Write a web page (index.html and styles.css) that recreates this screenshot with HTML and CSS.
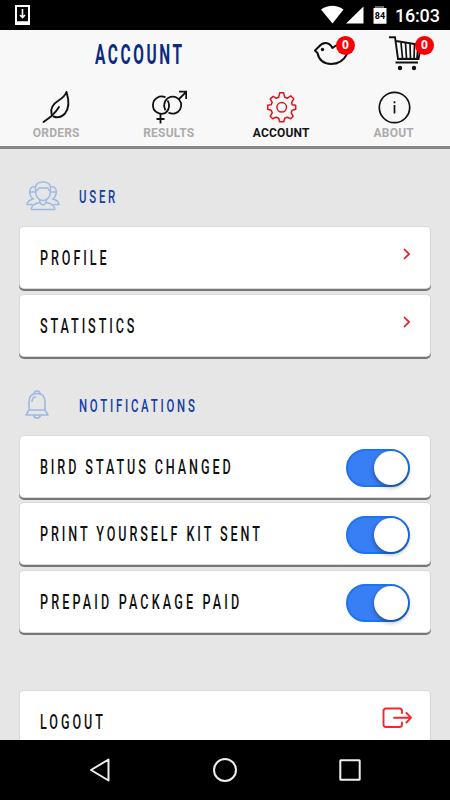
FILE: index.html
```html
<!DOCTYPE html>
<html lang="en">
<head>
<meta charset="utf-8">
<title>Account</title>
<link rel="stylesheet" href="styles.css">
</head>
<body>
<div class="status">
  <svg class="status-download" width="15" height="20" viewBox="0 0 15 20"><path fill="#fff" fill-rule="evenodd" d="M0 0H15V20H0ZM2 2V16.300H13V2Z"/><path d="M7.500 4v8M5 10l2.500 2.500L10 10" fill="none" stroke="#fff" stroke-width="1.600"/></svg>
  <div class="status-right">
    <svg width="66" height="20" viewBox="0 0 66 20"><path d="M0 4.500Q11.500-3 22.500 4.500L11.500 18.500Z" fill="#fff"/><path d="M25 18.500L42.500 1.500V18.500Z" fill="#fff"/><path d="M54.500 1h8v2h3v15.700H52.500V3h2z" fill="#fff"/><path d="M54.500 1h8v2H54.500z" fill="#666"/><text class="battery" x="58.900" y="13.500" text-anchor="middle">84</text></svg>
    <span class="clock">16:03</span>
  </div>
</div>
<header class="header">
  <div class="titlebar">
    <h1 class="title"><span>ACCOUNT</span></h1>
    <div class="tool bird">
      <svg width="36" height="28" viewBox="0 0 36 28" fill="none" stroke="#111" stroke-width="2" stroke-linejoin="round"><path d="M1 11.500L4.500 8Q9.500 2 15 5Q17 6 18.500 9L22 6.500Q26 4 31 5L33 15Q28 25 17 25Q5.500 24.500 3.500 14Z"/><circle cx="8.500" cy="10.500" r="1.700" fill="#111" stroke="none"/></svg>
      <span class="badge">0</span>
    </div>
    <div class="tool cart">
      <svg width="36" height="35" viewBox="0 0 36 35" fill="none" stroke="#111" stroke-width="1.900"><path d="M0 1.200H6L9 23H29.500L32 9L7 5M6.500 26.500H29"/><path d="M12 6.500l1.500 16M16.500 7l1 15.500M21 8l.5 14.500M25.500 8.500l-.5 14M29 9l-1 13.500" stroke-width="1.700"/><path d="M9 22.800H29.500"/><circle cx="11" cy="32" r="2.200" fill="#111" stroke="none"/><circle cx="25" cy="32" r="2.200" fill="#111" stroke="none"/></svg>
      <span class="badge">0</span>
    </div>
  </div>
  <nav class="tabs">
    <a class="tab"><svg width="36" height="36" viewBox="0 0 36 36" fill="none" stroke="#111" stroke-width="1.900" stroke-linecap="round"><path d="M5.500 34L13 28.500Q18 24 21 19"/><path d="M28.500 4C31 12 31.500 20 27 25.500Q22 31 15.500 28.500M13.500 26C12 20 15 16 20.500 12.500Q26.500 9 28.500 4"/></svg><span>ORDERS</span></a>
    <a class="tab"><svg width="36" height="36" viewBox="0 0 36 36" fill="none" stroke="#111" stroke-width="1.800"><path d="M14.500 9.400A8.700 8.700 0 1 0 14 25.200Q18.500 22 18 16.500Q17.700 14 16.500 12.500"/><path d="M14.500 22.300Q12 18 14.300 13A8.500 8.500 0 1 1 17.500 24.500"/><path d="M27.500 11.500L35 4.200M28 3.700H35.200V11M9.500 26V35.500M5.500 31H13.500"/></svg><span>RESULTS</span></a>
    <a class="tab active"><svg width="36" height="36" viewBox="0 0 36 36" fill="none" stroke="#e0141b" stroke-width="1.500" stroke-linejoin="round"><g transform="translate(.7 .8)"><path d="M16 4H20L21 8.500L23.500 9.500L27 7L30 10L28 13.500L28.500 16L32 16.500V20.500L28.500 21.500L27.500 24L29.500 27.500L27 30L23.500 28.500L21 29.500L20 33H16L15 29.500L12.500 28.500L9 30L6.500 27.500L8.500 24L7.500 21.500L4 20.500V16.500L7.500 16L8.500 13.500L6.500 10L9.500 7.500L12.500 9.500L15 8.500Z"/><circle cx="18" cy="18.500" r="4.800"/></g></svg><span>ACCOUNT</span></a>
    <a class="tab"><svg width="36" height="36" viewBox="0 0 36 36" fill="none" stroke="#111" stroke-width="1.700"><circle cx="18.500" cy="19.500" r="15.200"/><path d="M18.500 17V25.500M18.500 13.300V15.200"/></svg><span>ABOUT</span></a>
  </nav>
</header>
<main class="content">
  <h2 class="section"><svg width="36" height="30" viewBox="-1 0 38 30" preserveAspectRatio="none" fill="none" stroke="#9db9e4" stroke-width="1.500" stroke-linejoin="round"><path d="M11 15Q10 11 10 7Q10 1 18 1Q26 1 26 7Q26 11 25 15Q22 19.500 18 19.500Q14 19.500 11 15ZM11 10Q13 9 13.500 7H23L25 10"/><path d="M14.500 19v2Q18 27 21.500 21v-2M14.500 21.500Q6 23 5.500 28.500H30.500Q30 23 21.500 21.500"/><path d="M10 6Q3.500 5 4 12Q5 17 8 18Q2 19 1 23.500H7M4 11H10M26 6Q32.500 5 32 12Q31 17 28 18Q34 19 35 23.500H29M26 11H32"/></svg><span>USER</span></h2>
  <div class="card"><span class="label">PROFILE</span><svg class="chevron" width="8" height="12" viewBox="0 0 8 12"><path d="M1 1L6 6L1 11"/></svg></div>
  <div class="card"><span class="label">STATISTICS</span><svg class="chevron" width="8" height="12" viewBox="0 0 8 12"><path d="M1 1L6 6L1 11"/></svg></div>
  <h2 class="section second"><svg width="36" height="30" viewBox="0 0 36 30" fill="none" stroke="#9db9e4" stroke-width="1.600" stroke-linejoin="round"><path d="M4 20V12Q4 3.500 12 3.500Q20 3.500 20 12V20L23 25H1L4 20H20M9 4Q9 1 12 1Q15 1 15 4M8.500 25Q9 28 12 28Q15 28 15.500 25M7 12Q7 7 11 7"/></svg><span>NOTIFICATIONS</span></h2>
  <div class="card"><span class="label">BIRD STATUS CHANGED</span><i class="toggle"></i></div>
  <div class="card"><span class="label">PRINT YOURSELF KIT SENT</span><i class="toggle"></i></div>
  <div class="card"><span class="label roomy">PREPAID PACKAGE PAID</span><i class="toggle"></i></div>
  <div class="card logout"><span class="label">LOGOUT</span><svg width="30" height="22" viewBox="0 0 30 22" fill="none" stroke="#f3282c" stroke-width="1.900" stroke-linecap="round" stroke-linejoin="round"><path d="M20 6V4Q20 1.500 17.500 1.500H4Q1.500 1.500 1.500 4V17.500Q1.500 20 4 20H17.500Q20 20 20 17.500V15.500M12 10.700H29M24.500 6L29 10.700L24.500 15.500"/></svg></div>
</main>
<footer class="navbar">
  <svg width="22" height="26" viewBox="0 0 22 26"><path d="M2 13L19.500 2.500V23.500Z"/></svg>
  <svg width="26" height="26" viewBox="0 0 26 26"><circle cx="13" cy="13" r="11"/></svg>
  <svg width="22" height="26" viewBox="0 0 22 26"><rect x="1.300" y="3.300" width="19.400" height="19.400" rx=".5"/></svg>
</footer>
</body>
</html>
```
FILE: styles.css
```css
* { box-sizing: border-box; }
body { margin: 0; height: 800px; overflow: hidden; display: flex; flex-direction: column; background: #e6e6e6; font-family: Roboto, sans-serif; }
svg { display: block; flex: none; }
.status { height: 30px; flex: none; background: #000; display: flex; justify-content: space-between; padding: 5px 9px 0 15px; }
.status-right { display: flex; gap: 8px; color: #fff; }
.battery { font: 700 9px Roboto, sans-serif; fill: #000; }
.clock { font-size: 18px; line-height: 22px; width: 46px; font-weight: 500; letter-spacing: -.2px; }
.header { height: 119px; flex: none; background: #f8f8f8; border-bottom: 3px solid #858888; }
.titlebar { height: 58px; display: flex; padding: 6px 0 0 95px; }
.title { margin: 0; flex: none; width: 219px; color: #0b2a82; font-size: 27px; line-height: 39px; font-weight: 700; }
.title span { display: inline-block; transform: scaleX(.57); transform-origin: 0 50%; letter-spacing: 4.600px; }
.tool { position: relative; flex: none; width: 75px; }
.cart { width: 61px; }
.bird svg { margin-top: 3px; }
.badge { position: absolute; left: 22px; top: 0; width: 19px; height: 19px; border-radius: 50%; background: #f90006; color: #fff; font: 700 12px/18px "Open Sans", sans-serif; text-align: center; }
.cart .badge { left: 26px; }
.tabs { display: grid; grid-template-columns: repeat(4, 1fr); }
.tab { display: flex; flex-direction: column; align-items: center; color: #acacac; font-size: 12px; font-weight: 700; line-height: 16px; letter-spacing: .2px; }
.tab svg { margin-bottom: 1px; }
.active { color: #151515; }
.content { flex: 1; min-height: 0; overflow: hidden; padding: 32px 20px 0; }
.section { display: flex; height: 46px; margin: 0; padding-left: 5px; color: #123ea5; font-size: 19px; font-weight: 500; line-height: 31px; }
.section svg { margin-right: 18px; }
.section span, .label { display: inline-block; white-space: nowrap; transform: scaleX(.6); transform-origin: 0 50%; }
.section span { letter-spacing: 4.600px; }
.second { margin-top: 34px; height: 46px; }
.card { display: flex; justify-content: space-between; height: 61px; margin-bottom: 6.500px; padding: 0 20px; align-items: center; background: #fff; border-radius: 4px; box-shadow: 0 0 0 1px #dadada, 0 2px 0 1px #777; }
.label { width: 300px; flex: none; margin-right: -40px; font-size: 21px; font-weight: 500; line-height: 61px; letter-spacing: 4.850px; color: #111; position: relative; top: 1px; }
.roomy { letter-spacing: 5.250px; }
.chevron { fill: none; stroke: #e8141b; stroke-width: 1.700; margin: -7px -1px 0 0; }
.toggle { position: relative; flex: none; width: 64px; height: 38px; margin-top: 3px; border: 2px solid #1c74f2; border-radius: 19px; background: #387ef5; }
.toggle::after { content: ""; position: absolute; right: 0; top: 0; width: 34px; height: 34px; border-radius: 50%; background: #fff; box-shadow: 0 2px 5px rgba(0,0,0,.4); }
.logout { margin-top: 59px; }
.logout svg { margin: -7px -2px 0 0; }
.navbar { height: 60px; flex: none; background: #000; display: flex; align-items: center; justify-content: space-between; padding: 0 89px; }
.navbar svg { fill: none; stroke: #eee; stroke-width: 2; stroke-linejoin: round; }
```
